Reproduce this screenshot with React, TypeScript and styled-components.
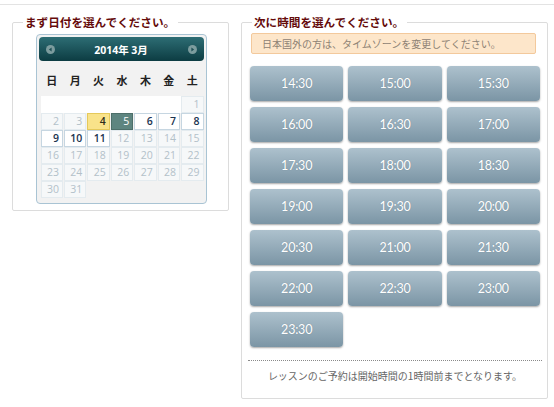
import styled, { createGlobalStyle } from "styled-components";

const GlobalStyle = createGlobalStyle`
  html, body {
    margin: 0;
    background: #ffffff;
    font-family: "Noto Sans CJK JP", "Open Sans", sans-serif;
  }
`;

const Page = styled.div`
  padding-top: 4px;
  width: 554px;
  height: 407px;
  box-sizing: border-box;
  overflow: hidden;
`;

const TopRule = styled.div`
  border-top: 1px solid #e3e3e3;
`;

const Columns = styled.div`
  display: flex;
  align-items: flex-start;
  gap: 12px;
  padding: 9px 0 0 12px;
`;

const Fieldset = styled.fieldset<{ $width: number }>`
  width: ${({ $width }) => $width}px;
  box-sizing: border-box;
  margin: 0;
  padding: 0 7px 0 8px;
  border: 1px solid #dcdcdc;
  border-radius: 2px;
  min-width: 0;
`;

const Legend = styled.legend`
  padding: 0 3px 0 2px;
  margin-left: 2px;
  font-size: 11.6px;
  line-height: 16px;
  font-weight: bold;
  color: #650b0b;
`;

/* calendar */

const Calendar = styled.div`
  width: 171px;
  box-sizing: border-box;
  margin: 4px auto 6px;
  padding: 2px;
  border: 1px solid #a9c4d4;
  border-radius: 4px;
  background: #f2f2f2;
`;

const CalHeader = styled.div`
  height: 24px;
  border-radius: 4px;
  background: linear-gradient(#2d6d74, #0c3c42);
  display: flex;
  align-items: center;
  justify-content: space-between;
  padding: 0 7px;
`;

const CalTitle = styled.span`
  color: #ffffff;
  font-size: 10.5px;
  font-weight: bold;
  font-family: "Open Sans", "Noto Sans CJK JP", sans-serif;
`;

const NavIcon = ({ dir }: { dir: "prev" | "next" }) => (
  <svg width="9" height="9" viewBox="0 0 9 9">
    <circle cx="4.5" cy="4.5" r="4.5" fill="#7c9c9e" />
    {dir === "prev" ? (
      <path d="M5.6 2.4 L2.9 4.5 L5.6 6.6 Z" fill="#1d4f55" />
    ) : (
      <path d="M3.4 2.4 L6.1 4.5 L3.4 6.6 Z" fill="#1d4f55" />
    )}
  </svg>
);

const Grid = styled.div`
  display: grid;
  grid-template-columns: repeat(7, 1fr);
  column-gap: 1px;
  padding: 0 0 3px 2px;
`;

const DayName = styled.div`
  height: 35px;
  line-height: 39px;
  text-align: center;
  font-size: 11px;
  font-weight: bold;
  color: #222222;
`;

type CellKind = "blank" | "off" | "open" | "today" | "picked";

const cellColors: Record<CellKind, [string, string, string]> = {
  blank: ["#ffffff", "#ffffff", "transparent"],
  off: ["#f6f8f9", "#e4ebef", "#b3c1c9"],
  open: ["#ffffff", "#c6d6e1", "#1b3450"],
  today: ["#f9e38a", "#e5c95a", "#2d2d1a"],
  picked: ["#5e8580", "#4d6f6a", "#ffffff"],
};

const Cell = styled.div<{ $kind: CellKind }>`
  height: 17px;
  box-sizing: border-box;
  padding-right: 3px;
  border: 1px solid ${({ $kind }) => cellColors[$kind][1]};
  background: ${({ $kind }) => cellColors[$kind][0]};
  box-shadow: ${({ $kind }) => ($kind === "blank" ? "1px 0 0 #ffffff" : "none")};
  color: ${({ $kind }) => cellColors[$kind][2]};
  text-align: right;
  font-family: "Open Sans", sans-serif;
  font-size: 10.5px;
  line-height: 15px;
  font-weight: ${({ $kind }) => ($kind === "open" || $kind === "today" ? 600 : 400)};
`;

/* times */

const Notice = styled.div`
  margin: 3px 4px 12px 1px;
  height: 21px;
  box-sizing: border-box;
  border: 1px solid #f3c99c;
  border-radius: 2px;
  background: #fde6ca;
  color: #8e8274;
  font-size: 10px;
  line-height: 19px;
  padding-left: 10px;
`;

const Times = styled.div`
  display: grid;
  grid-template-columns: repeat(3, 1fr);
  column-gap: 5px;
  row-gap: 6px;
`;

const TimeButton = styled.button`
  height: 35px;
  border: none;
  border-radius: 4px;
  background: linear-gradient(#adc1cd, #7b95a5);
  box-shadow: 0 1px 2px rgba(0, 0, 0, 0.35);
  color: #ffffff;
  font-family: Lato, "Open Sans", sans-serif;
  font-size: 12.5px;
  letter-spacing: -0.2px;
  text-shadow: 0 0 1px rgba(60, 80, 95, 0.4);
  padding: 0;
  cursor: pointer;
`;

const Divider = styled.div`
  margin: 13px -2px 0;
  border-top: 1px dotted #8a8a8a;
`;

const Footnote = styled.p`
  margin: 8px 0 15px;
  text-align: center;
  font-size: 10px;
  line-height: 14px;
  color: #666666;
`;

const dayNames = ["日", "月", "火", "水", "木", "金", "土"];

const buildDays = () => {
  const cells: { label: string; kind: CellKind }[] = [];
  for (let i = 0; i < 6; i++) cells.push({ label: "", kind: "blank" });
  for (let d = 1; d <= 31; d++) {
    let kind: CellKind = "off";
    if (d === 4) kind = "today";
    else if (d === 5) kind = "picked";
    else if (d >= 6 && d <= 11) kind = "open";
    cells.push({ label: String(d), kind });
  }
  return cells;
};

const times = [
  "14:30", "15:00", "15:30",
  "16:00", "16:30", "17:00",
  "17:30", "18:00", "18:30",
  "19:00", "19:30", "20:00",
  "20:30", "21:00", "21:30",
  "22:00", "22:30", "23:00",
  "23:30",
];

export default function App() {
  const days = buildDays();
  return (
    <Page>
      <GlobalStyle />
      <TopRule />
      <Columns>
        <Fieldset $width={217}>
          <Legend>まず日付を選んでください。</Legend>
          <Calendar>
            <CalHeader>
              <NavIcon dir="prev" />
              <CalTitle>2014年 3月</CalTitle>
              <NavIcon dir="next" />
            </CalHeader>
            <Grid>
              {dayNames.map((n) => (
                <DayName key={n}>{n}</DayName>
              ))}
              {days.map((c, i) => (
                <Cell key={i} $kind={c.kind}>
                  {c.label}
                </Cell>
              ))}
            </Grid>
          </Calendar>
        </Fieldset>
        <Fieldset $width={307}>
          <Legend>次に時間を選んでください。</Legend>
          <Notice>日本国外の方は、タイムゾーンを変更してください。</Notice>
          <Times>
            {times.map((t) => (
              <TimeButton key={t}>{t}</TimeButton>
            ))}
          </Times>
          <Divider />
          <Footnote>レッスンのご予約は開始時間の1時間前までとなります。</Footnote>
        </Fieldset>
      </Columns>
    </Page>
  );
}
